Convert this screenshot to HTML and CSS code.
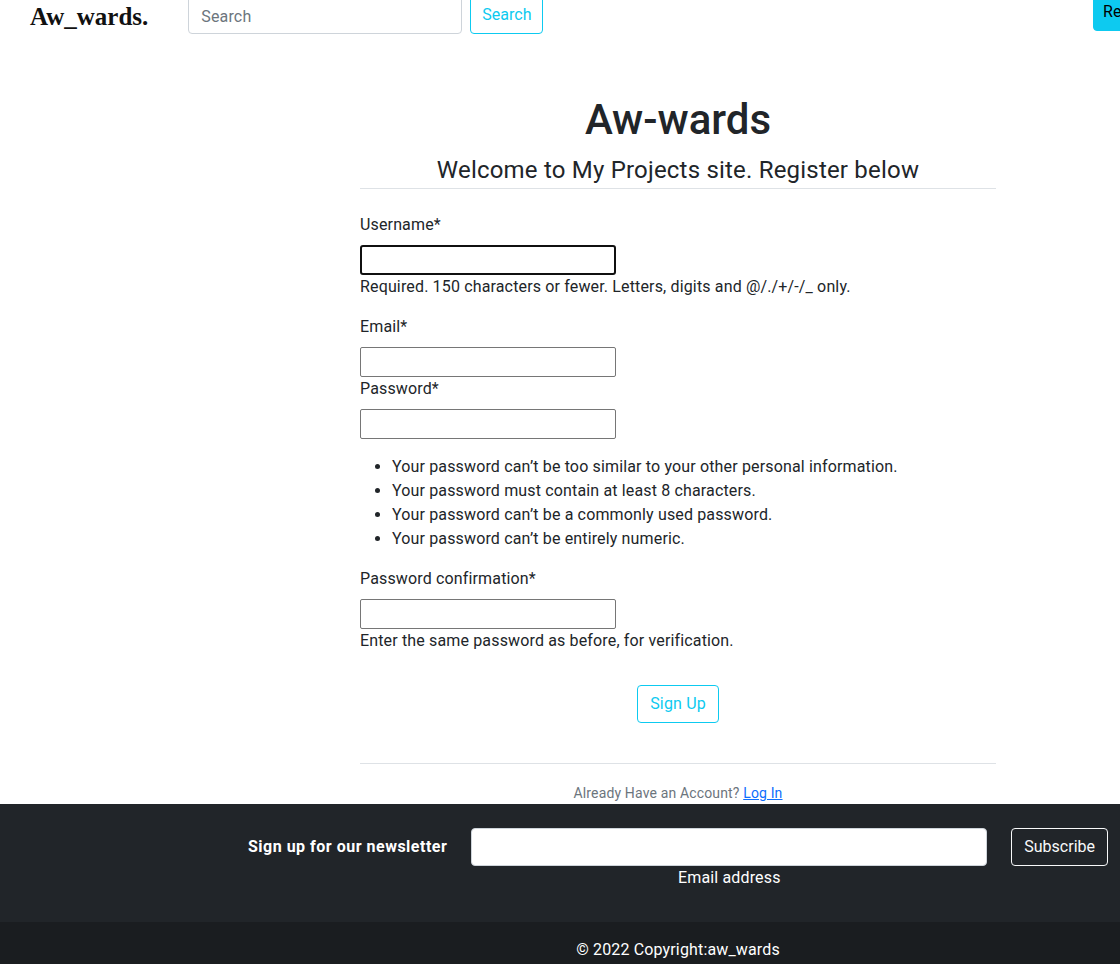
FILE: index.html
```html
<!DOCTYPE html>
<html lang="en">
<head>
<meta charset="utf-8">
<title>Aw-wards | Register</title>
<link rel="stylesheet" href="styles.css">
</head>
<body>
<nav class="navbar">
  <a class="brand" href="#">Aw_wards.</a>
  <form class="search-form">
    <input class="search-input" type="text" placeholder="Search">
    <button class="btn btn-outline-info" type="button">Search</button>
  </form>
  <button class="btn btn-info nav-right" type="button">Register</button>
</nav>

<div class="page">
  <main class="content-section">
    <h1 class="title">Aw-wards</h1>
    <h2 class="subtitle">Welcome to My Projects site. Register below</h2>

    <form class="register-form">
      <div class="field">
        <label class="label">Username*</label>
        <input class="text-input focused" type="text">
        <div class="help">Required. 150 characters or fewer. Letters, digits and @/./+/-/_ only.</div>
      </div>
      <div class="field tight">
        <label class="label">Email*</label>
        <input class="text-input" type="email">
      </div>
      <div class="field">
        <label class="label">Password*</label>
        <input class="text-input" type="password">
        <ul class="help-list">
          <li>Your password can’t be too similar to your other personal information.</li>
          <li>Your password must contain at least 8 characters.</li>
          <li>Your password can’t be a commonly used password.</li>
          <li>Your password can’t be entirely numeric.</li>
        </ul>
      </div>
      <div class="field">
        <label class="label">Password confirmation*</label>
        <input class="text-input" type="password">
        <div class="help">Enter the same password as before, for verification.</div>
      </div>
      <div class="submit-row">
        <button class="btn btn-outline-info" type="button">Sign Up</button>
      </div>
    </form>

    <div class="login-row">
      <small class="muted">Already Have an Account? <a class="login-link" href="#">Log In</a></small>
    </div>
  </main>
</div>

<footer class="footer">
  <div class="newsletter">
    <div class="newsletter-row">
      <p class="newsletter-label">Sign up for our newsletter</p>
      <div class="newsletter-field">
        <input class="newsletter-input" type="email">
        <div class="newsletter-help">Email address</div>
      </div>
      <button class="btn btn-outline-light" type="button">Subscribe</button>
    </div>
  </div>
  <div class="copyright">
    <span class="copyright-text">© 2022 Copyright:aw_wards</span>
  </div>
</footer>
</body>
</html>
```

FILE: styles.css
```css
* { box-sizing: border-box; }

html, body {
  margin: 0;
  padding: 0;
  overflow-x: hidden;
}

body {
  font-family: Roboto, "Liberation Sans", sans-serif;
  font-size: 16px;
  line-height: 24px;
  letter-spacing: 0.15px;
  color: #212529;
  background: #fff;
}

/* ---------- navbar ---------- */
.navbar {
  display: flex;
  align-items: flex-start;
  height: 38px;
  margin-top: -4px;
  padding-left: 30px;
  white-space: nowrap;
}

.brand {
  font-family: "Liberation Serif", "Times New Roman", serif;
  font-weight: bold;
  font-size: 25px;
  line-height: 38px;
  letter-spacing: 0;
  color: #111;
  text-decoration: none;
  margin-right: 40px;
  padding-top: 2px;
}

.search-form {
  display: flex;
  gap: 8px;
}

.search-form .btn {
  letter-spacing: 0;
  padding: 6px 11px;
}

.search-input {
  width: 274px;
  height: 38px;
  border: 1px solid #ced4da;
  border-radius: 4px;
  padding: 7px 12px 5px;
  font-family: inherit;
  font-size: 16px;
  letter-spacing: 0.15px;
  color: #212529;
}
.search-input::placeholder { color: #6c757d; }

.btn {
  font-family: inherit;
  font-size: 16px;
  line-height: 24px;
  letter-spacing: 0.15px;
  padding: 6px 12px;
  border-radius: 4px;
  border: 1px solid transparent;
  background: transparent;
  cursor: pointer;
  height: 38px;
}

.btn-outline-info {
  color: #0dcaf0;
  border-color: #0dcaf0;
}

.btn-info {
  background: #0dcaf0;
  border-color: #0dcaf0;
  color: #000;
}

.nav-right {
  flex: none;
  width: 80px;
  margin-left: auto;
  margin-right: -53px;
  margin-top: -3px;
  padding: 6px 9px;
  text-align: left;
}

.btn-outline-light {
  color: #f8f9fa;
  border-color: #f8f9fa;
  letter-spacing: 0;
  padding: 6px 12px;
}

/* ---------- main ---------- */
.page {
  padding-left: 236px;
}

.content-section {
  width: 636px;
  margin: 0 auto;
}

.title {
  font-size: 42px;
  line-height: 52px;
  font-weight: 500;
  letter-spacing: 0;
  text-align: center;
  margin: 60px 0 0;
}

.subtitle {
  font-size: 24px;
  line-height: 28px;
  font-weight: 400;
  letter-spacing: 0.2px;
  text-align: center;
  margin: 10px 0 0;
  padding-bottom: 4px;
  border-bottom: 1px solid #dee2e6;
}

.register-form {
  padding-top: 24px;
}

.field {
  display: flex;
  flex-direction: column;
  align-items: flex-start;
  margin-bottom: 16px;
}
.field.tight { margin-bottom: 0; }

.label {
  display: block;
  margin-bottom: 8px;
}

.text-input {
  width: 256px;
  height: 30px;
  border: 1px solid #767676;
  border-radius: 2px;
  padding: 1px 2px;
  font-family: inherit;
  font-size: 13px;
}

.text-input.focused {
  border: 2px solid #101010;
  border-radius: 3px;
}

.help { display: block; }

.help-list {
  margin: 16px 0 0;
  padding-left: 32px;
}

.submit-row {
  display: flex;
  justify-content: center;
  padding-top: 16px;
  padding-bottom: 40px;
  border-bottom: 1px solid #dee2e6;
}

.login-row {
  text-align: center;
  padding-top: 19px;
  font-size: 14px;
  line-height: 21px;
}

.muted {
  font-size: 14px;
  line-height: 21px;
  color: #6c757d;
}

.login-link {
  color: #0d6efd;
  text-decoration: underline;
}

/* ---------- footer ---------- */
.footer {
  background: #212529;
  color: #fff;
}

.newsletter {
  padding: 24px 0 32px 236px;
}

.newsletter-row {
  display: flex;
  justify-content: center;
  align-items: flex-start;
  gap: 24px;
}

.newsletter-label {
  margin: 0;
  font-weight: bold;
  line-height: 38px;
  letter-spacing: 0.5px;
}

.newsletter-field {
  width: 516px;
  text-align: center;
}

.newsletter-input {
  display: block;
  width: 100%;
  height: 38px;
  border: 1px solid #ced4da;
  border-radius: 4px;
  background: #fff;
}

.newsletter-help {
  height: 24px;
}

.copyright {
  background: rgba(0, 0, 0, 0.2);
  padding: 16px 0 16px 236px;
  text-align: center;
}
```
